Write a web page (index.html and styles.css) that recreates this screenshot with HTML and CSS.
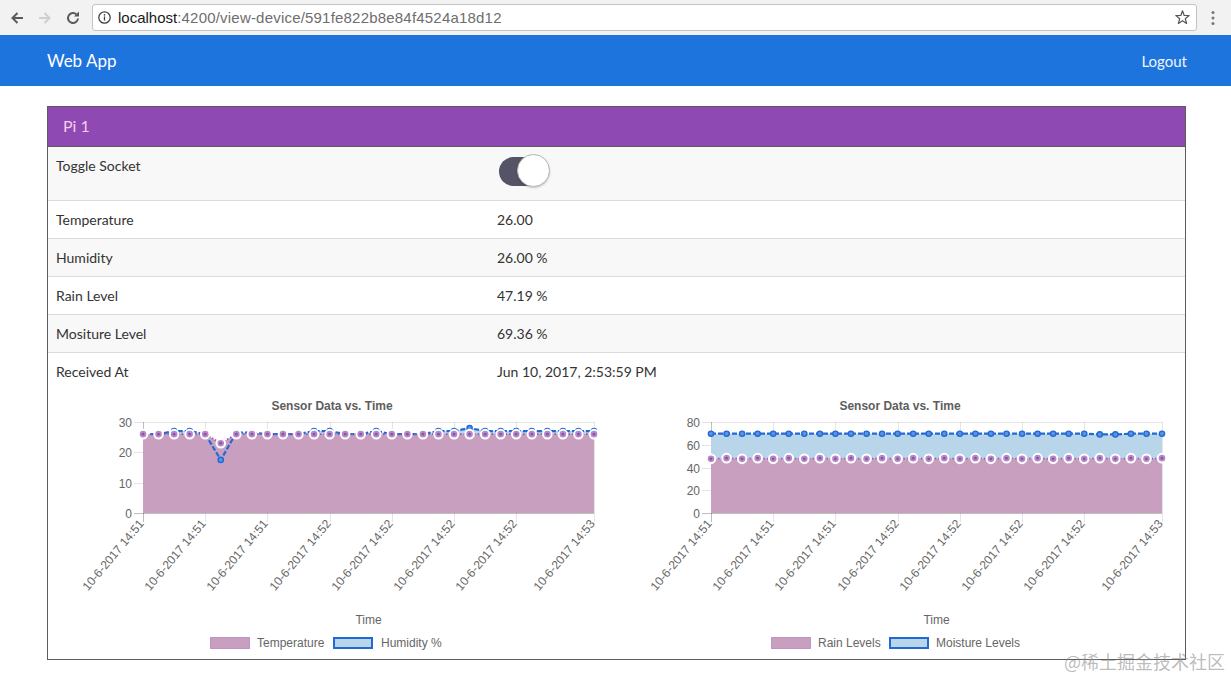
FILE: index.html
```html
<!DOCTYPE html>
<html lang="en">
<head>
<meta charset="utf-8">
<title>Web App</title>
<link rel="stylesheet" href="styles.css">
</head>
<body>
<header class="chrome">
  <span class="nav-btn"><svg viewBox="0 0 16 16"><path d="M14 8H3.5M8.5 3L3.5 8l5 5" fill="none" stroke="#5a5a5a" stroke-width="2"/></svg></span>
  <span class="nav-btn"><svg viewBox="0 0 16 16"><path d="M2 8h10.5M7.5 3l5 5-5 5" fill="none" stroke="#cfcfcf" stroke-width="2"/></svg></span>
  <span class="nav-btn"><svg viewBox="0 0 16 16"><path d="M13 8.5a5 5 0 1 1-1.6-4.2" fill="none" stroke="#5a5a5a" stroke-width="2"/><path d="M9 6.4h5V1.4z" fill="#5a5a5a"/></svg></span>
  <div class="omnibox">
    <svg class="info" viewBox="0 0 13 13"><circle cx="6.5" cy="6.5" r="5.7" fill="none" stroke="#444" stroke-width="1.3"/><rect x="5.85" y="5.4" width="1.3" height="4.2" fill="#444"/><circle cx="6.5" cy="3.8" r=".85" fill="#444"/></svg>
    <span class="url"><span class="host">localhost</span>:4200/view-device/591fe822b8e84f4524a18d12</span>
    <svg class="star" viewBox="0 0 15 15"><polygon points="7.5,0.8 9.2,5.45 14.16,5.64 10.26,8.7 11.61,13.46 7.5,10.7 3.39,13.46 4.74,8.7 0.84,5.64 5.8,5.45" fill="none" stroke="#555" stroke-width="1.2" stroke-linejoin="round"/></svg>
  </div>
  <span class="menu"><svg viewBox="0 0 4 16"><circle cx="2" cy="2.5" r="1.5" fill="#777"/><circle cx="2" cy="8" r="1.5" fill="#777"/><circle cx="2" cy="13.5" r="1.5" fill="#777"/></svg></span>
</header>

<nav class="navbar">
  <a class="brand">Web App</a>
  <a class="logout">Logout</a>
</nav>

<main class="main">
  <section class="panel">
    <div class="panel-heading">Pi 1</div>
    <div class="table">
      <div class="row alt">
        <div class="cell">Toggle Socket</div>
        <div class="cell"><span class="switch"><span class="switch-track"></span><span class="switch-knob"></span></span></div>
      </div>
      <div class="row">
        <div class="cell">Temperature</div>
        <div class="cell">26.00</div>
      </div>
      <div class="row alt">
        <div class="cell">Humidity</div>
        <div class="cell">26.00 %</div>
      </div>
      <div class="row">
        <div class="cell">Rain Level</div>
        <div class="cell">47.19 %</div>
      </div>
      <div class="row alt">
        <div class="cell">Mositure Level</div>
        <div class="cell">69.36 %</div>
      </div>
      <div class="row">
        <div class="cell">Received At</div>
        <div class="cell">Jun 10, 2017, 2:53:59 PM</div>
      </div>
    </div>
    <div class="charts">
      <div class="chart" id="chart-th"></div>
      <div class="chart" id="chart-rm"></div>
    </div>
  </section>
</main>

<div class="watermark">@稀土掘金技术社区</div>

<script src="charts.js"></script>
</body>
</html>
```

FILE: styles.css
```css
* { box-sizing: border-box; }
html, body { margin: 0; padding: 0; }
body {
  width: 1231px;
  height: 679px;
  overflow: hidden;
  position: relative;
  background: #fff;
  font-family: Lato, "Noto Sans", sans-serif;
  color: #333;
}

/* browser chrome */
.chrome {
  height: 35px;
  background: #f2f2f2;
  display: flex;
  align-items: center;
  padding-left: 3px;
}
.nav-btn {
  width: 28px;
  height: 27px;
  display: flex;
  align-items: center;
  justify-content: center;
}
.nav-btn svg { width: 16px; height: 16px; }
.omnibox {
  margin-left: 5px;
  width: 1105px;
  height: 27px;
  border: 1px solid #c4c4c4;
  border-radius: 3px;
  background: #fff;
  display: flex;
  align-items: center;
  padding: 0 6px 0 5px;
}
.info { width: 13px; height: 13px; flex: none; }
.url {
  flex: 1;
  margin-left: 7px;
  font-family: "Liberation Sans", Arial, sans-serif;
  font-size: 15px;
  letter-spacing: 0.2px;
  color: #6e6e6e;
  white-space: nowrap;
}
.url .host { color: #1a1a1a; letter-spacing: 0; }
.star { width: 15px; height: 15px; flex: none; }
.menu {
  width: 32px;
  display: flex;
  justify-content: center;
}
.menu svg { width: 4px; height: 16px; }

/* navbar */
.navbar {
  height: 51px;
  background: #1e74dd;
  display: flex;
  align-items: center;
  justify-content: space-between;
  padding: 0 44px 0 47px;
}
.brand { color: #fff; font-size: 17px; }
.logout { color: #eef3fc; font-size: 15px; }

/* panel */
.main { padding: 20px 45px 0 47px; }
.panel { border: 1px solid #5c5c5c; }
.panel-heading {
  background: #8e49b3;
  color: #f4cdef;
  font-size: 16px;
  line-height: 18px;
  padding: 10px 15px 11px;
  border-bottom: 1px solid #5c5c5c;
}
.row {
  display: grid;
  grid-template-columns: 441px 1fr;
  border-top: 1px solid #dcdcdc;
}
.row:first-child { border-top: 0; }
.row.alt { background: #f8f8f8; }
.cell {
  padding: 9px 8px 8px;
  font-size: 14px;
  line-height: 20px;
}
.switch {
  display: block;
  position: relative;
  width: 51px;
  height: 34px;
  margin: -2px 0 4px 2px;
}
.switch-track {
  position: absolute;
  left: 0;
  top: 3px;
  width: 44px;
  height: 29px;
  border-radius: 15px;
  background: #545466;
}
.switch-knob {
  position: absolute;
  right: 0;
  top: 0;
  width: 33px;
  height: 33px;
  border-radius: 50%;
  background: #fff;
  border: 1px solid #b5b5b5;
  box-shadow: 0 1px 2px rgba(0, 0, 0, 0.2);
}

/* charts */
.charts { display: flex; }
.chart { width: 568px; height: 269px; flex: none; }
.chart svg { display: block; }
.chart svg text {
  font-family: "Liberation Sans", Arial, sans-serif;
  font-size: 12px;
  fill: #666;
}
.chart svg .c-title { font-weight: bold; text-anchor: middle; fill: #5e5e5e; }
.chart svg .c-ylab { text-anchor: end; }
.chart svg .c-xlab { text-anchor: end; }
.chart svg .c-axis { text-anchor: middle; }
.c-grid { stroke: rgba(0, 0, 0, 0.1); stroke-width: 1; }
.c-zero { stroke: rgba(0, 0, 0, 0.25); stroke-width: 1; }

/* overlay watermark */
.watermark {
  position: absolute;
  left: 1064px;
  top: 649px;
  font-family: "Noto Sans CJK SC", sans-serif;
  font-size: 18px;
  line-height: 24px;
  color: rgba(130, 130, 130, 0.55);
  white-space: nowrap;
}
```

FILE: charts.js
```js
(function () {
  var NS = 'http://www.w3.org/2000/svg';
  var W = 568, H = 269, L = 95, R = 546, T = 32, B = 123, N = 30;
  var STEP = (R - L) / (N - 1);
  var TICKS = [0, 4, 8, 12, 16, 20, 24, 29];
  var TIMES = ['14:51', '14:51', '14:51', '14:52', '14:52', '14:52', '14:52', '14:53'];
  var PINK_FILL = '#c99fc0', PINK_LINE = '#9657b2';
  var BLUE_FILL = '#b9d5ea', BLUE_LINE = '#2169d6';

  function el(tag, attrs, parent, text) {
    var e = document.createElementNS(NS, tag);
    for (var k in attrs) e.setAttribute(k, attrs[k]);
    if (text != null) e.textContent = text;
    if (parent) parent.appendChild(e);
    return e;
  }

  function fill(n, v) { var a = []; for (var i = 0; i < n; i++) a.push(v); return a; }

  function draw(host, cfg) {
    var svg = el('svg', { width: W, height: H, viewBox: '0 0 ' + W + ' ' + H }, host);
    function yOf(v) { return B - v / cfg.max * (B - T); }
    function xOf(i) { return L + i * STEP; }

    el('text', { x: W / 2, y: 20, 'class': 'c-title' }, svg, 'Sensor Data vs. Time');

    for (var v = 0; v <= cfg.max; v += cfg.stepV) {
      var y = Math.round(yOf(v)) + 0.5;
      el('line', { x1: L - 9, x2: R, y1: y, y2: y, 'class': v === 0 ? 'c-zero' : 'c-grid' }, svg);
      el('text', { x: L - 11, y: y + 4, 'class': 'c-ylab' }, svg, String(v));
    }

    TICKS.forEach(function (t, k) {
      var x = Math.round(xOf(t)) + 0.5;
      el('line', { x1: x, x2: x, y1: T, y2: B + 9, 'class': k === 0 ? 'c-zero' : 'c-grid' }, svg);
      el('text', { 'class': 'c-xlab', transform: 'translate(' + (x + 1) + ',' + (B + 11) + ') rotate(-50)' }, svg, '10-6-2017 ' + TIMES[k]);
    });

    el('text', { x: (L + R) / 2, y: 234, 'class': 'c-axis' }, svg, 'Time');

    var sets = cfg.sets.slice().reverse();
    sets.forEach(function (s) {
      var d = s.data.map(function (v, i) { return (i ? 'L' : 'M') + xOf(i).toFixed(1) + ' ' + yOf(v).toFixed(1); }).join(' ');
      el('path', { d: d + ' L' + R + ' ' + B + ' L' + L + ' ' + B + ' Z', fill: s.fill }, svg);
    });
    sets.forEach(function (s) {
      var d = s.data.map(function (v, i) { return (i ? 'L' : 'M') + xOf(i).toFixed(1) + ' ' + yOf(v).toFixed(1); }).join(' ');
      el('path', { d: d, fill: 'none', stroke: s.line, 'stroke-width': s.width, 'stroke-dasharray': s.dash }, svg);
      s.data.forEach(function (v, i) {
        if (s.kind === 'ring') {
          el('circle', { cx: xOf(i), cy: yOf(v), r: 4.3, fill: '#b58ac6', stroke: '#fff', 'stroke-width': 2 }, svg);
          el('circle', { cx: xOf(i), cy: yOf(v), r: 1.4, fill: '#8e4fae' }, svg);
        } else {
          el('circle', { cx: xOf(i), cy: yOf(v), r: 2.6, fill: '#5a94e0', stroke: BLUE_LINE, 'stroke-width': 1.4 }, svg);
        }
      });
    });

    cfg.legend.forEach(function (it) {
      if (it.kind === 'ring') {
        el('rect', { x: it.bx + 0.5, y: 247.5, width: 39, height: 11, fill: PINK_FILL, stroke: PINK_LINE, 'stroke-width': 1, 'stroke-dasharray': '1 1' }, svg);
      } else {
        el('rect', { x: it.bx + 1, y: 248, width: 38, height: 10, fill: BLUE_FILL, stroke: BLUE_LINE, 'stroke-width': 2 }, svg);
      }
      el('text', { x: it.tx, y: 257 }, svg, it.label);
    });
  }

  var temp = fill(N, 26); temp[5] = 23;
  var hum = [26, 26, 27, 27, 26, 17.5, 26.5, 26.5, 26, 26, 26, 27, 27, 26, 26, 27, 26, 26, 26, 27, 27, 28, 27, 27, 27, 27, 27, 27, 27, 27];
  var rain = [], moist = [];
  for (var i = 0; i < N; i++) {
    rain.push(i % 2 ? 48.2 : 47.6);
    moist.push(i >= 25 && i <= 26 ? 69.1 : 69.7);
  }

  draw(document.getElementById('chart-th'), {
    max: 30, stepV: 10,
    sets: [
      { data: temp, fill: PINK_FILL, line: PINK_LINE, width: 1.6, dash: '1.5 2', kind: 'ring' },
      { data: hum, fill: BLUE_FILL, line: BLUE_LINE, width: 2.2, dash: '5 2', kind: 'dot' }
    ],
    legend: [
      { kind: 'ring', bx: 162, tx: 209, label: 'Temperature' },
      { kind: 'dot', bx: 285, tx: 333, label: 'Humidity %' }
    ]
  });

  draw(document.getElementById('chart-rm'), {
    max: 80, stepV: 20,
    sets: [
      { data: rain, fill: PINK_FILL, line: PINK_LINE, width: 1.6, dash: '1.5 2', kind: 'ring' },
      { data: moist, fill: BLUE_FILL, line: BLUE_LINE, width: 2.2, dash: '5 2', kind: 'dot' }
    ],
    legend: [
      { kind: 'ring', bx: 155, tx: 202, label: 'Rain Levels' },
      { kind: 'dot', bx: 273, tx: 320, label: 'Moisture Levels' }
    ]
  });
})();
```
